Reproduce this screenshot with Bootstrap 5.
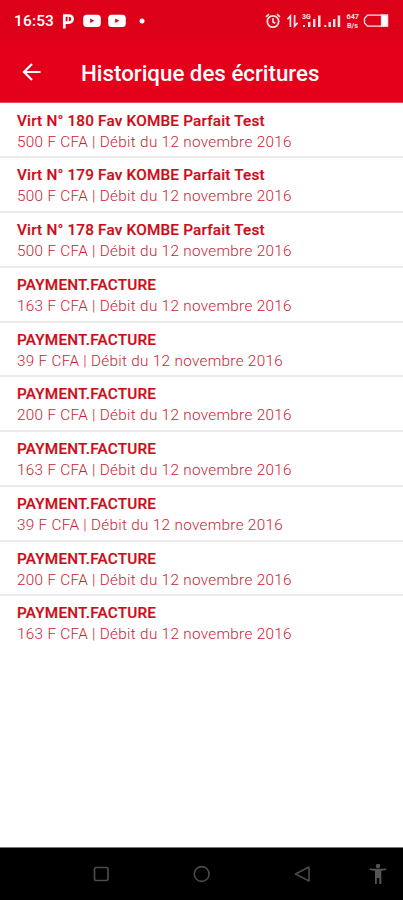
<!DOCTYPE html>
<html lang="fr">
<head>
<meta charset="utf-8">
<meta name="viewport" content="width=device-width, initial-scale=1">
<title>Historique des écritures</title>
<link href="https://cdn.jsdelivr.net/npm/bootstrap@5.3.0/dist/css/bootstrap.min.css" rel="stylesheet">
<style>
body { font-family: Roboto, "Liberation Sans", sans-serif; height: 900px; overflow: hidden; }
.status-bar { height: 40px; background: #dc0019; padding: 2px 14px 0 14px; }
.clock { font-size: 15.5px; font-weight: 500; width: 40px; line-height: 1; letter-spacing: .15px; white-space: nowrap; padding-top: 2px; }
.app-bar { height: 63px; background: #e4001b; padding: 2px 22px 0; border-bottom: 1px solid #e8475a; }
.app-title { font-size: 22.3px; font-weight: 500; margin-left: 39px; padding-top: 2px; line-height: 1; white-space: nowrap; }
.entries { padding-top: .5px; }
.list-group-flush > .entry { height: 54.78px; padding: 7px 17px 0; border: 0; border-bottom: 2px solid #ebebeb; white-space: nowrap; }
.list-group-flush > .entry:last-child { border-bottom: 0; }
.entry-name { font-size: 15.3px; line-height: 20px; font-weight: 500; color: #cc0d18; letter-spacing: .19px; -webkit-text-stroke: .2px #cc0d18; }
.entry-info { font-size: 15.3px; line-height: 22px; font-weight: 300; color: #ca2334; letter-spacing: .3px; }
.nav-keys { height: 53px; background: #000; border-top: 1px solid #777; padding-left: 92px; }
svg { display: block; flex: none; }
.gap-3px { margin-left: 3px; }
.gap-5px { margin-left: 5px; }
.gap-6px { margin-left: 6px; }
.gap-7px { margin-left: 7px; }
.gap-12px { margin-left: 12px; }
.gap-57px { margin-left: 57px; }
.gap-83px { margin-left: 83px; }
</style>
</head>
<body class="d-flex flex-column bg-white">
<header class="text-white">
  <div class="status-bar d-flex align-items-center">
    <span class="clock">16:53</span>
    <svg class="gap-7px" width="14" height="18" viewBox="0 0 14 18" fill="none" stroke="#fff" stroke-width="2.7"><path d="M3.300 16.500V3M2 3.500h6a3.500 3.500 0 0 1 0 7.200H4"/><path d="M7.200 4.500v5" stroke-width="1.300"/></svg>
    <svg class="gap-7px" width="19" height="14" viewBox="0 0 19 14"><rect x="1.200" y=".7" width="17.6" height="12.4" rx="3.500" fill="#fff"/><path d="M8.200 4.500v4.600l4.200-2.300z" fill="#dc0019"/></svg>
    <svg class="gap-6px" width="19" height="14" viewBox="0 0 19 14"><rect x="1.200" y=".7" width="17.6" height="12.4" rx="3.500" fill="#fff"/><path d="M8.200 4.500v4.600l4.200-2.300z" fill="#dc0019"/></svg>
    <svg class="gap-12px" width="7" height="6"><circle cx="4" cy="3" r="2.500" fill="#fff"/></svg>
    <div class="d-flex align-items-center ms-auto">
      <svg width="16" height="16" viewBox="0 0 16 16" fill="none" stroke="#ffe3e5" stroke-width="1.700"><circle cx="8" cy="8.500" r="5.700"/><path d="M8 5.300v3.600l2.300 1.400M1 3.800l3-2.600M15 3.800l-3-2.600"/></svg>
      <svg class="gap-5px" width="13" height="16" viewBox="0 0 13 16" fill="none" stroke="#ffe3e5" stroke-width="1.700"><path d="M4.400 14V3L1.500 6.200M8.600 2v11l3-3.200"/></svg>
      <svg class="gap-3px" width="39" height="18" viewBox="0 0 39 18" fill="#ffe3e5"><text x="0" y="6.500" font-family="Roboto, sans-serif" font-size="7" font-weight="700">3G</text><path d="M1 13h2v2H1zM6 10h2.400v5H6zM11 7h2.400v8H11zM16 3.500h2.500V15H16zM22.300 13h2v2h-2zM26.500 10h2.400v5h-2.400zM31 7h2.400v8H31zM35.700 3.500h2.500V15h-2.500z"/></svg>
      <svg class="gap-5px" width="14" height="18" viewBox="0 0 14 18" fill="#ffe3e5" font-family="Roboto, sans-serif" font-size="7.400" font-weight="700"><text x=".5" y="7" textLength="12.500" lengthAdjust="spacingAndGlyphs">647</text><text x="1" y="16" textLength="11" lengthAdjust="spacingAndGlyphs">B/s</text></svg>
      <svg class="gap-3px" width="26" height="14" viewBox="0 0 26 14" fill="none" stroke="#ffe3e5" stroke-width="1.300"><path d="M4.500 1.200h20v11h-20L1.500 9V4.500z"/><path d="M18.500 1.200h6v11h-6z" fill="#fff"/></svg>
    </div>
  </div>
  <div class="app-bar d-flex align-items-center">
    <svg width="20" height="20" viewBox="0 0 20 20" fill="none" stroke="#fff" stroke-width="2.200"><path d="M18.500 10H2.500M10 2L2 10l8 8"/></svg>
    <h1 class="app-title mb-0">Historique des écritures</h1>
  </div>
</header>
<main class="list-group list-group-flush flex-grow-1 entries">
  <div class="list-group-item entry"><div class="entry-name">Virt N° 180 Fav KOMBE Parfait Test</div><div class="entry-info">500 F CFA | Débit du 12 novembre 2016</div></div>
  <div class="list-group-item entry"><div class="entry-name">Virt N° 179 Fav KOMBE Parfait Test</div><div class="entry-info">500 F CFA | Débit du 12 novembre 2016</div></div>
  <div class="list-group-item entry"><div class="entry-name">Virt N° 178 Fav KOMBE Parfait Test</div><div class="entry-info">500 F CFA | Débit du 12 novembre 2016</div></div>
  <div class="list-group-item entry"><div class="entry-name">PAYMENT.FACTURE</div><div class="entry-info">163 F CFA | Débit du 12 novembre 2016</div></div>
  <div class="list-group-item entry"><div class="entry-name">PAYMENT.FACTURE</div><div class="entry-info">39 F CFA | Débit du 12 novembre 2016</div></div>
  <div class="list-group-item entry"><div class="entry-name">PAYMENT.FACTURE</div><div class="entry-info">200 F CFA | Débit du 12 novembre 2016</div></div>
  <div class="list-group-item entry"><div class="entry-name">PAYMENT.FACTURE</div><div class="entry-info">163 F CFA | Débit du 12 novembre 2016</div></div>
  <div class="list-group-item entry"><div class="entry-name">PAYMENT.FACTURE</div><div class="entry-info">39 F CFA | Débit du 12 novembre 2016</div></div>
  <div class="list-group-item entry"><div class="entry-name">PAYMENT.FACTURE</div><div class="entry-info">200 F CFA | Débit du 12 novembre 2016</div></div>
  <div class="list-group-item entry"><div class="entry-name">PAYMENT.FACTURE</div><div class="entry-info">163 F CFA | Débit du 12 novembre 2016</div></div>
</main>
<footer class="nav-keys d-flex align-items-center">
  <svg width="18" height="18" viewBox="0 0 18 18" fill="none" stroke="#4b4b4b" stroke-width="1.700"><rect x="2.500" y="2.500" width="13.500" height="13" rx="1.500"/></svg>
  <svg class="gap-83px" width="18" height="18" viewBox="0 0 18 18" fill="none" stroke="#4b4b4b" stroke-width="1.600"><circle cx="8.700" cy="9" r="7.400"/></svg>
  <svg class="gap-83px" width="18" height="18" viewBox="0 0 18 18" fill="none" stroke="#4b4b4b" stroke-width="1.600" stroke-linejoin="round"><path d="M15 2v14L1.500 9z"/></svg>
  <svg class="gap-57px" width="18" height="22" viewBox="0 0 18 22" fill="#555"><circle cx="9" cy="3" r="2.200"/><path d="M.5 7l.3-1.600Q9 6 17.200 5.400l.3 1.600-5.200.800V21h-2v-6h-2.500v6H6V7.800z"/></svg>
</footer>
</body>
</html>
